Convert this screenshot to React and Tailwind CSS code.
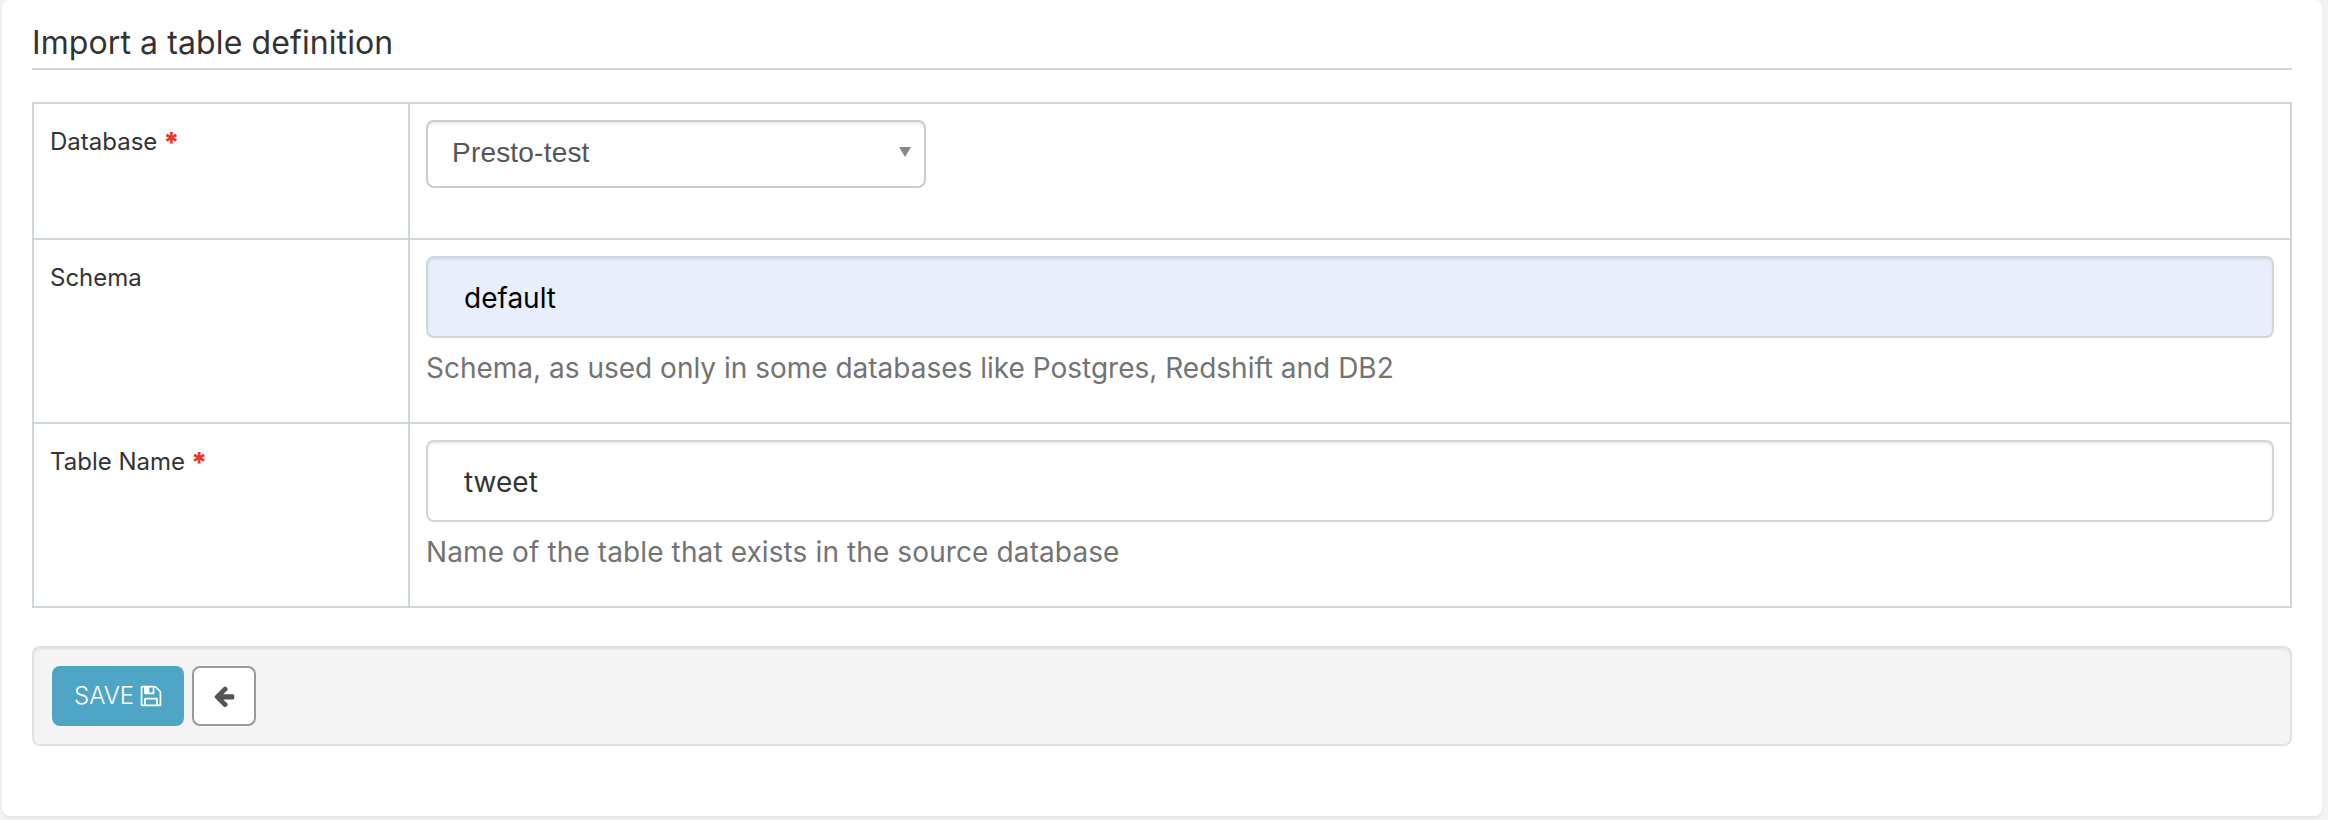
function Row({ label, required, className, children }) {
  return (
    <div className={`flex border-t-2 border-[#cfd6da] ${className}`}>
      <div className="w-[374px] shrink-0 pl-4 pt-[21px] text-[24px] leading-[34px] text-[#333]">
        {label}
        {required && <strong className="ml-[6px] align-[-3px] text-[28px] leading-[0] font-extrabold text-[#ef3524]">*</strong>}
      </div>
      <div className="flex-1 border-l-2 border-[#cfd6da] p-4">{children}</div>
    </div>
  );
}

function Field({ value, help, className, helpClassName }) {
  return (
    <>
      <input
        defaultValue={value}
        className={`block h-[82px] w-full rounded-[8px] border-2 border-[#cfd6da] px-[36px] pt-[2px] text-[28px] shadow-[inset_0_2px_2px_rgba(0,0,0,0.075)] outline-none ${className}`}
      />
      <p className={`mt-[10px] text-[28px] leading-[40px] text-[#737373] ${helpClassName}`}>{help}</p>
    </>
  );
}

export default function App() {
  return (
    <div className="h-[820px] w-[2328px] overflow-hidden bg-[#f3f3f3] pl-[2px] pr-[6px] font-['Inter',sans-serif]">
      <main className="h-[816px] rounded-[8px] bg-white px-[30px] shadow-[0_2px_3px_rgba(0,0,0,0.06)]">
        <h3 className="h-[70px] border-b-2 border-[#cfd6da] pt-[23px] text-[32px] leading-[40px] tracking-[0.1px] text-[#333]">
          Import a table definition
        </h3>
        <div className="mt-8 border-x-2 border-b-2 border-[#cfd6da]">
          <Row label="Database" required className="h-[136px]">
            <div className="flex h-[68px] w-[500px] items-start justify-between rounded-[8px] border-2 border-[#ccc] pl-6 pr-[13px] pt-[13px] font-['Liberation_Sans',sans-serif] text-[28px] leading-[36px] tracking-[0.2px] text-[#555] shadow-[inset_0_2px_2px_rgba(0,0,0,0.075)]">
              Presto-test
              <svg className="mt-[12px] h-[10px] w-[12px]" viewBox="0 0 12 10">
                <path d="M0 0h12L6 10z" fill="#888" />
              </svg>
            </div>
          </Row>
          <Row label="Schema" className="h-[184px]">
            <Field
              value="default"
              help="Schema, as used only in some databases like Postgres, Redshift and DB2"
              className="bg-[#e8eefc] text-black"
              helpClassName="tracking-normal"
            />
          </Row>
          <Row label="Table Name" required className="h-[184px]">
            <Field
              value="tweet"
              help="Name of the table that exists in the source database"
              className="bg-white text-[#333]"
              helpClassName="tracking-[0.11px]"
            />
          </Row>
        </div>
        <div className="mt-[38px] flex h-[100px] gap-2 rounded-[8px] border-2 border-[#e1e1e1] bg-[#f4f4f4] p-[18px] shadow-[inset_0_2px_2px_rgba(0,0,0,0.05)]">
          <button className="flex h-[60px] w-[132px] items-center rounded-[8px] bg-[#4fa5c5] pl-[22px] text-[24px] font-light text-white">
            <span className="w-[65px] text-left">SAVE</span>
            <svg className="mb-px h-6 w-6" viewBox="0 0 1792 1792" fill="currentColor">
              <path d="M512 1536h768v-384h-768v384zm896 0h128v-896q0-14-10-38.5t-20-34.5l-281-281q-10-10-34-20t-39-10v416q0 40-28 68t-68 28h-576q-40 0-68-28t-28-68v-416h-128v1280h128v-416q0-40 28-68t68-28h832q40 0 68 28t28 68v416zm-384-928v-320q0-13-9.5-22.5t-22.5-9.5h-192q-13 0-22.5 9.5t-9.5 22.5v320q0 13 9.5 22.5t22.5 9.5h192q13 0 22.5-9.5t9.5-22.5zm640 32v928q0 40-28 68t-68 28h-1344q-40 0-68-28t-28-68v-1344q0-40 28-68t68-28h928q40 0 88 20t76 48l280 280q28 28 48 76t20 88z" />
            </svg>
          </button>
          <button aria-label="Back" className="flex h-[60px] w-[64px] items-center justify-center rounded-[8px] border-2 border-[#999] bg-white text-[#555]">
            <svg className="mb-px h-6 w-6" viewBox="0 0 1792 1792" fill="currentColor">
              <path d="M1664 896v128q0 53-32.5 90.5t-84.5 37.5h-704l293 294q38 36 38 90t-38 90l-75 76q-37 37-90 37-52 0-91-37l-651-652q-37-37-37-90 0-52 37-91l651-650q38-38 91-38 52 0 90 38l75 74q38 38 38 91t-38 91l-293 293h704q52 0 84.5 37.5t32.5 90.5z" />
            </svg>
          </button>
        </div>
      </main>
    </div>
  );
}
